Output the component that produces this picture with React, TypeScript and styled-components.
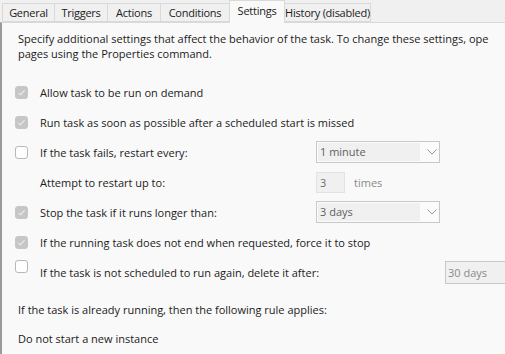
import React from 'react';
import styled, { createGlobalStyle } from 'styled-components';

const GlobalStyle = createGlobalStyle`
  html, body {
    margin: 0;
    padding: 0;
    background: #f0f0f0;
  }
`;

const Window = styled.div`
  width: 505px;
  height: 354px;
  overflow: hidden;
  background: #f0f0f0;
  font-family: 'Open Sans', 'Noto Sans', sans-serif;
  font-size: 11px;
  color: #1b1b1b;
  display: flex;
  flex-direction: column;
`;

const TabStrip = styled.div`
  display: flex;
  align-items: flex-end;
  height: 22px;
  padding-left: 3px;
  position: relative;
  z-index: 1;
`;

const Tab = styled.div<{ $w: number; $active?: boolean }>`
  width: ${p => p.$w}px;
  box-sizing: border-box;
  height: ${p => (p.$active ? 23 : 19)}px;
  margin-bottom: ${p => (p.$active ? -1 : 0)}px;
  display: flex;
  align-items: center;
  justify-content: center;
  padding-bottom: ${p => (p.$active ? 3 : 0)}px;
  background: ${p => (p.$active ? '#f9f9f9' : '#f0f0f0')};
  border: 1px solid #d9d9d9;
  border-bottom: ${p => (p.$active ? 'none' : '1px solid #d9d9d9')};
  margin-left: -1px;
  white-space: nowrap;
  letter-spacing: -0.25px;
`;

const Panel = styled.div`
  flex: 1;
  background: #f9f9f9;
  border-top: 1px solid #d9d9d9;
  border-left: 2px solid #9a9a9a;
  padding: 8px 0 0 13px;
  display: flex;
  flex-direction: column;
`;

const Description = styled.p`
  margin: 0 0 16px 3px;
  line-height: 15px;
  white-space: nowrap;
`;

const Row = styled.div`
  display: flex;
  align-items: center;
  height: 30px;
  white-space: nowrap;
`;

const Box = styled.div<{ $checked?: boolean; $raise?: number }>`
  width: 13px;
  height: 13px;
  box-sizing: border-box;
  border-radius: 3px;
  flex: none;
  display: flex;
  align-items: center;
  justify-content: center;
  background: ${p => (p.$checked ? '#c6c6c6' : '#ffffff')};
  border: 1px solid ${p => (p.$checked ? '#c6c6c6' : '#b8b8b8')};
  margin-top: ${p => -(p.$raise || 0) * 2}px;
`;

const Label = styled.span<{ $w?: number; $indent?: boolean }>`
  display: inline-block;
  width: ${p => (p.$w ? `${p.$w}px` : 'auto')};
  margin-left: ${p => (p.$indent ? 25 : 12)}px;
  flex: none;
`;

const Select = styled.div`
  width: 124px;
  height: 22px;
  box-sizing: border-box;
  border: 1px solid #c8c8c8;
  background: #fbfbfb;
  padding: 1px;
  display: flex;
  align-items: center;
  flex: none;
`;

const SelectValue = styled.div`
  width: 102px;
  height: 18px;
  background: #f0f0f0;
  color: #5f5f5f;
  padding-left: 2px;
  box-sizing: border-box;
  line-height: 18px;
`;

const Chevron = styled.svg`
  margin-left: 7px;
`;

const NumberBox = styled.div`
  width: 29px;
  height: 21px;
  box-sizing: border-box;
  border: 1px solid #e2e2e2;
  background: #f0f0f0;
  color: #6d6d6d;
  padding-left: 3px;
  line-height: 19px;
  flex: none;
`;

const Muted = styled.span`
  color: #8a8a8a;
  margin-left: 9px;
`;

const WideInput = styled.div`
  width: 60px;
  height: 23px;
  box-sizing: border-box;
  border: 1px solid #c8c8c8;
  border-right: none;
  background: #f0f0f0;
  color: #8a8a8a;
  padding-left: 2px;
  line-height: 21px;
  margin-left: auto;
  flex: none;
`;

const Plain = styled.div<{ $h: number }>`
  height: ${p => p.$h}px;
  display: flex;
  align-items: center;
  padding-left: 3px;
  white-space: nowrap;
`;

const Check = () => (
  <svg width="9" height="9" viewBox="0 0 9 9">
    <path d="M1.5 4.8 L3.6 6.8 L7.6 2.2" fill="none" stroke="#eeeeee" strokeWidth="1.1" />
  </svg>
);

const Dropdown: React.FC<{ value: string }> = ({ value }) => (
  <Select>
    <SelectValue>{value}</SelectValue>
    <Chevron width="10" height="6" viewBox="0 0 10 6">
      <path d="M0.5 0.5 L5 5 L9.5 0.5" fill="none" stroke="#9a9a9a" strokeWidth="1" />
    </Chevron>
  </Select>
);

const tabs = [
  { name: 'General', w: 53 },
  { name: 'Triggers', w: 54 },
  { name: 'Actions', w: 54 },
  { name: 'Conditions', w: 70 },
  { name: 'Settings', w: 56, active: true },
  { name: 'History (disabled)', w: 87 },
];

const App: React.FC = () => (
  <>
    <GlobalStyle />
    <Window>
      <TabStrip>
        {tabs.map(t => (
          <Tab key={t.name} $w={t.w} $active={t.active}>
            {t.name}
          </Tab>
        ))}
      </TabStrip>
      <Panel>
        <Description>
          Specify additional settings that affect the behavior of the task. To change these settings, ope
          <br />
          pages using the Properties command.
        </Description>

        <Row>
          <Box $checked><Check /></Box>
          <Label>Allow task to be run on demand</Label>
        </Row>
        <Row>
          <Box $checked><Check /></Box>
          <Label>Run task as soon as possible after a scheduled start is missed</Label>
        </Row>
        <Row>
          <Box />
          <Label $w={276}>If the task fails, restart every:</Label>
          <Dropdown value="1 minute" />
        </Row>
        <Row>
          <Label $w={276} $indent>Attempt to restart up to:</Label>
          <NumberBox>3</NumberBox>
          <Muted>times</Muted>
        </Row>
        <Row>
          <Box $checked><Check /></Box>
          <Label $w={276}>Stop the task if it runs longer than:</Label>
          <Dropdown value="3 days" />
        </Row>
        <Row>
          <Box $checked><Check /></Box>
          <Label>If the running task does not end when requested, force it to stop</Label>
        </Row>
        <Row>
          <Box $raise={6} />
          <Label>If the task is not scheduled to run again, delete it after:</Label>
          <WideInput>30 days</WideInput>
        </Row>

        <Plain $h={44}>If the task is already running, then the following rule applies:</Plain>
        <Plain $h={14}>Do not start a new instance</Plain>
      </Panel>
    </Window>
  </>
);

export default App;
